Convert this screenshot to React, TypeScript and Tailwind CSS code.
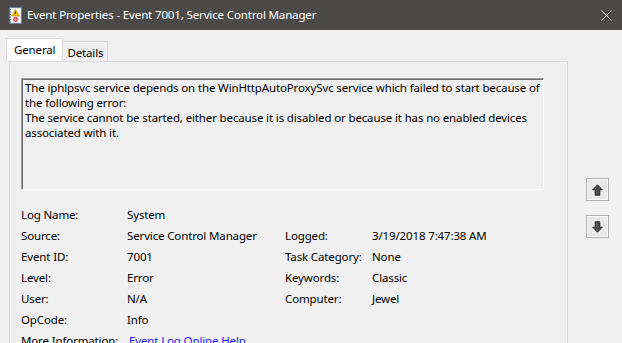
import React from "react";

const font = "font-['Segoe_UI','Noto_Sans',sans-serif]";

function EventIcon() {
  return (
    <svg width="15" height="17" viewBox="0 0 15 17" aria-hidden="true">
      <rect x="2.5" y="0.5" width="12" height="16" fill="#dfe6ee" stroke="#6b7f99" />
      <rect x="4" y="2" width="9" height="13" fill="#f6f8fb" />
      <path d="M1 2.5h3M1 5h3M1 7.5h3M1 10h3M1 12.5h3M1 15h3" stroke="#4a5a70" strokeWidth="1" />
      <path d="M8.5 2.5 L12.5 9 L4.5 9 Z" fill="#f5c400" stroke="#a77a00" strokeWidth="0.6" />
      <rect x="8" y="4.5" width="1" height="2.5" fill="#222" />
      <circle cx="8.5" cy="12.5" r="2.4" fill="#d83434" />
      <circle cx="8.5" cy="12.5" r="1" fill="#f6f8fb" />
    </svg>
  );
}

function ArrowButton({ down }: { down?: boolean }) {
  return (
    <button className="flex h-[23px] w-[23px] items-center justify-center border border-[#adadad] bg-[#e9e9e9] shadow-[inset_0_0_0_1px_#fafafa]">
      <svg
        width="11"
        height="12"
        viewBox="0 0 11 12"
        aria-hidden="true"
        className={down ? "rotate-180" : ""}
      >
        <path
          d="M5.5 0.8 L10.3 5.8 L7.8 5.8 L7.8 11.2 L3.2 11.2 L3.2 5.8 L0.7 5.8 Z"
          fill="#505050"
          stroke="#1e1e1e"
          strokeWidth="0.9"
          strokeLinejoin="round"
        />
      </svg>
    </button>
  );
}

const rows: [string, string, string?, string?][] = [
  ["Log Name:", "System"],
  ["Source:", "Service Control Manager", "Logged:", "3/19/2018 7:47:38 AM"],
  ["Event ID:", "7001", "Task Category:", "None"],
  ["Level:", "Error", "Keywords:", "Classic"],
  ["User:", "N/A", "Computer:", "Jewel"],
  ["OpCode:", "Info"],
];

export default function App() {
  return (
    <div className={`flex h-[343px] w-[622px] flex-col overflow-hidden bg-[#f0f0f0] text-[11.5px] tracking-[-0.14px] text-black ${font}`}>
      <header className="flex h-[30px] shrink-0 items-center bg-[#4b4a48] pl-[7px] pr-[10px] text-white">
        <EventIcon />
        <span className="ml-[5px] flex-1 leading-none">Event Properties - Event 7001, Service Control Manager</span>
        <svg width="11" height="11" viewBox="0 0 11 11" aria-hidden="true">
          <path d="M0.5 0.5 L10.5 10.5 M10.5 0.5 L0.5 10.5" stroke="#fff" strokeWidth="1" />
        </svg>
      </header>

      <div className="flex flex-1 pl-[6px]">
        <div className="flex w-[562px] flex-col pt-[8px]">
          <div className="relative z-10 flex items-end">
            <div className="flex h-[23px] items-center border border-b-0 border-[#d9d9d9] bg-white px-[7px]">General</div>
            <div className="mb-[-1px] flex h-[21px] items-center border border-l-0 border-[#d9d9d9] border-b-[#d9d9d9] bg-[#f0f0f0] px-[4px] pt-[2px]">
              Details
            </div>
          </div>
          <section className="ml-[3px] flex flex-1 flex-col border border-b-0 border-[#d9d9d9] pl-[11px] pt-[16px]">
            <div className="h-[112px] w-[523px] border border-t-[#a0a0a0] border-l-[#a0a0a0] border-r-white border-b-white shadow-[inset_1px_1px_0_#696969] px-[3px] pt-[1px] leading-[15px]">
              <p className="whitespace-nowrap">The iphlpsvc service depends on the WinHttpAutoProxySvc service which failed to start because of</p>
              <p className="whitespace-nowrap">the following error:</p>
              <p className="whitespace-nowrap">The service cannot be started, either because it is disabled or because it has no enabled devices</p>
              <p className="whitespace-nowrap">associated with it.</p>
            </div>

            <div className="mt-[14px] grid grid-cols-[106px_158px_87px_1fr] leading-[21px]">
              {rows.map(([l, v, l2, v2]) => (
                <React.Fragment key={l}>
                  <span>{l}</span>
                  <span>{v}</span>
                  <span>{l2 ?? ""}</span>
                  <span>{v2 ?? ""}</span>
                </React.Fragment>
              ))}
              <span className="whitespace-nowrap">More Information:</span>
              <span className="col-span-3 pl-[2px] text-[#1a1aff]">Event Log Online Help</span>
            </div>
          </section>
        </div>

        <aside className="ml-[18px] flex flex-col gap-[14px] pt-[148px]">
          <ArrowButton />
          <ArrowButton down />
        </aside>
      </div>
    </div>
  );
}
